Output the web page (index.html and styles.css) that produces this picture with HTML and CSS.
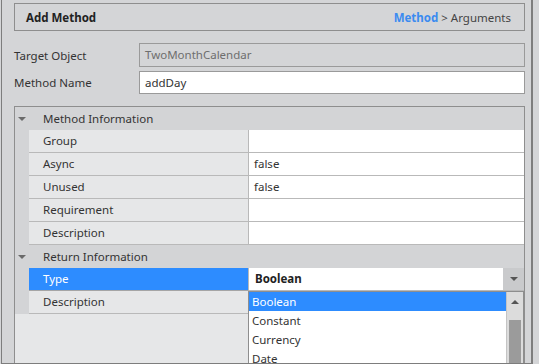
FILE: index.html
```html
<!DOCTYPE html>
<html lang="en">
<head>
    <meta charset="UTF-8">
    <title>Add Method</title>
    <link rel="stylesheet" href="styles.css">
</head>
<body>
    <div class="window">
        <!-- Title bar with breadcrumb -->
        <div class="header">
            <span class="title">Add Method</span>
            <span class="crumbs"><b class="current">Method</b> &gt; Arguments</span>
        </div>

        <!-- Basic fields -->
        <div class="field">
            <label class="field-label">Target Object</label>
            <div class="field-box readonly">TwoMonthCalendar</div>
        </div>
        <div class="field">
            <label class="field-label">Method Name</label>
            <div class="field-box">addDay</div>
        </div>

        <!-- Property grid -->
        <div class="grid">
            <div class="category"><span class="gutter"><span class="caret"></span></span>Method Information</div>
            <div class="row"><span class="gutter"></span><span class="name">Group</span><span class="value"></span></div>
            <div class="row"><span class="gutter"></span><span class="name">Async</span><span class="value">false</span></div>
            <div class="row"><span class="gutter"></span><span class="name">Unused</span><span class="value">false</span></div>
            <div class="row"><span class="gutter"></span><span class="name">Requirement</span><span class="value"></span></div>
            <div class="row"><span class="gutter"></span><span class="name">Description</span><span class="value"></span></div>

            <div class="category"><span class="gutter"><span class="caret"></span></span>Return Information</div>
            <div class="row selected"><span class="gutter"></span><span class="name">Type</span><span class="value combo"><b>Boolean</b><span class="combo-btn"><span class="caret"></span></span></span></div>
            <div class="row"><span class="gutter"></span><span class="name">Description</span><span class="value"></span></div>

            <!-- Open dropdown list -->
            <div class="dropdown">
                <div class="options">
                    <div class="option active">Boolean</div>
                    <div class="option">Constant</div>
                    <div class="option">Currency</div>
                    <div class="option">Date</div>
                </div>
                <div class="scrollbar">
                    <span class="up"></span>
                    <span class="thumb"></span>
                </div>
            </div>
        </div>
    </div>
</body>
</html>
```

FILE: styles.css
```css
/* Page */
body {
    margin: 0;
    background: #d4d5d7;
    font-family: "Noto Sans", "Open Sans", sans-serif;
    font-size: 11.5px;
    color: #333;
}

.window {
    position: relative;
    width: 532px;
    height: 364px;
    margin-left: 1px;
    box-sizing: border-box;
    border-left: 1px solid #7d7d7d;
    border-right: 2px solid #7d7d7d;
    border-bottom: 1px solid #7d7d7d;
    padding: 3px 0 0 12px;
    overflow: hidden;
}

/* Header */
.header {
    width: 511px;
    height: 28px;
    box-sizing: border-box;
    border: 1px solid #8e8e8e;
    display: flex;
    align-items: center;
    justify-content: space-between;
    padding: 0 13px 0 11px;
}

.title {
    font-weight: bold;
    color: #222;
}

.crumbs {
    color: #444;
}

.crumbs .current {
    color: #3b8bf0;
}

/* Fields */
.field {
    display: flex;
    align-items: center;
    margin-top: 12px;
}

.field + .field {
    margin-top: 4px;
}

.field-label {
    width: 125px;
}

.field-box {
    width: 386px;
    height: 23px;
    box-sizing: border-box;
    border: 1px solid #9a9a9a;
    background: #fff;
    padding-left: 5px;
    line-height: 21px;
}

.field-box.readonly {
    height: 24px;
    line-height: 22px;
    background: transparent;
    color: #6e6e6e;
}

/* Property grid */
.grid {
    position: relative;
    width: 511px;
    height: 258px;
    margin-top: 12px;
    box-sizing: border-box;
    border: 1px solid #8e8e8e;
    border-bottom: none;
    background: #e6e7e8;
}

.gutter {
    width: 14px;
    flex: none;
    align-self: stretch;
    background: #d3d4d6;
    display: flex;
    align-items: center;
    justify-content: center;
}

.caret {
    width: 0;
    height: 0;
    border-left: 4px solid transparent;
    border-right: 4px solid transparent;
    border-top: 4px solid #6a6a6a;
}

.category {
    display: flex;
    align-items: center;
    height: 23px;
    background: #d3d4d6;
    gap: 14px;
}

.row {
    display: flex;
    height: 23px;
}

.name,
.value {
    border-bottom: 1px solid #b9b9b9;
    line-height: 22px;
}

.name {
    width: 205px;
    padding-left: 14px;
    border-right: 1px solid #b9b9b9;
    flex: none;
}

.value {
    flex: 1;
    background: #fff;
    padding-left: 5px;
}

.row.selected .name {
    background: #2d8cff;
    color: #fff;
    border-bottom-color: #a5a5a5;
}

.combo {
    display: flex;
    justify-content: space-between;
    padding-left: 6px;
    color: #222;
}

.combo-btn {
    width: 21px;
    background: #c9cacc;
    display: flex;
    align-items: center;
    justify-content: center;
}

.combo-btn .caret {
    border-top-color: #555;
}

/* Dropdown list over the grid */
.dropdown {
    position: absolute;
    left: 233px;
    top: 184px;
    width: 276px;
    height: 80px;
    box-sizing: border-box;
    border: 1px solid #8e8e8e;
    background: #fff;
    display: flex;
}

.options {
    flex: 1;
}

.option {
    height: 19px;
    line-height: 19px;
    padding-left: 3px;
}

.option.active {
    background: #2d8cff;
    color: #fff;
}

.scrollbar {
    width: 16px;
    border-left: 1px solid #c4c4c4;
    background: #dcdcdc;
    display: flex;
    flex-direction: column;
    align-items: center;
}

.up {
    margin-top: 8px;
    width: 0;
    height: 0;
    border-left: 4px solid transparent;
    border-right: 4px solid transparent;
    border-bottom: 4px solid #555;
}

.thumb {
    margin-top: 16px;
    width: 12px;
    flex: 1;
    background: #9b9b9b;
}
```
